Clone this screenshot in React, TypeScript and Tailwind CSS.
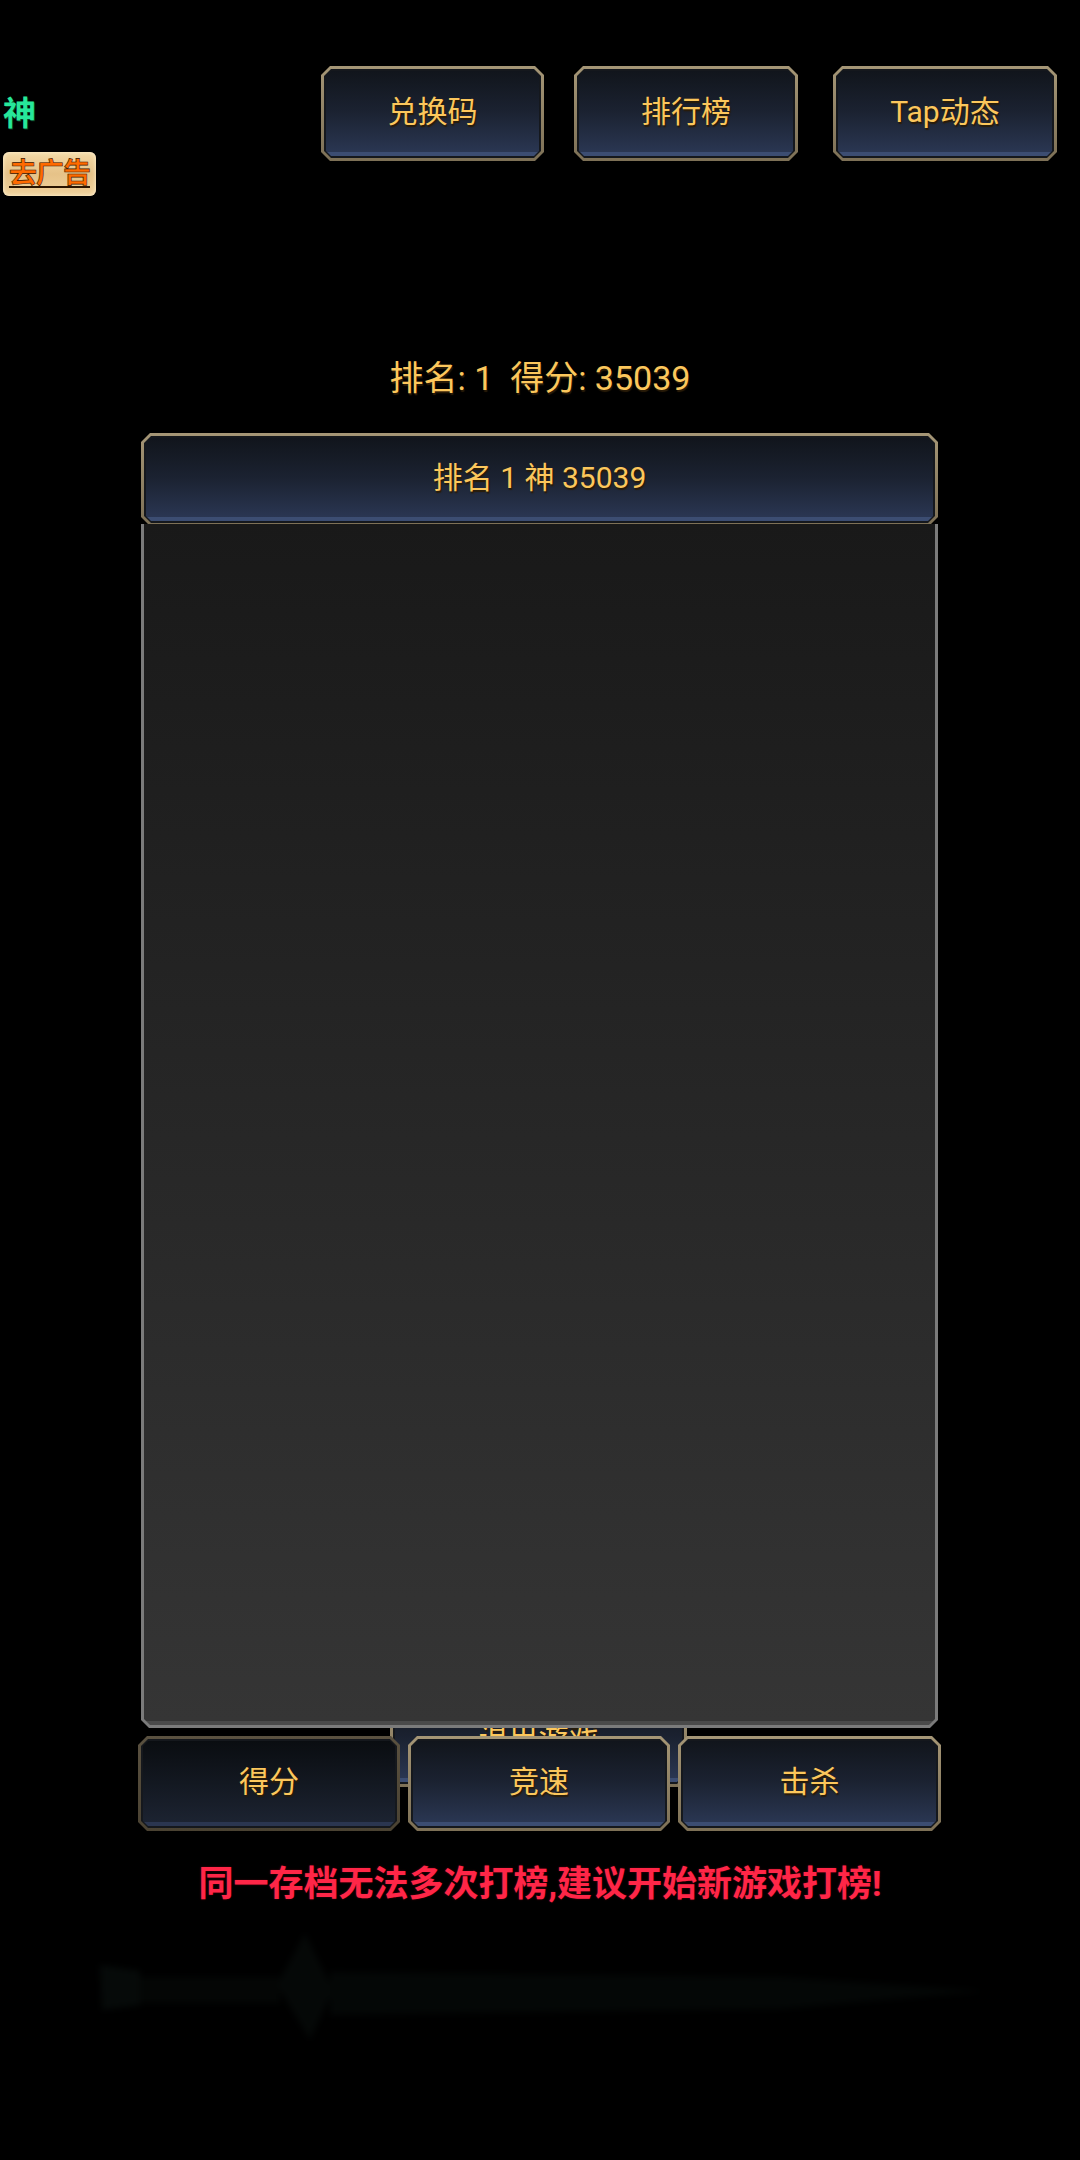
import { ReactNode } from "react";
import clsx from "clsx";

const font = "font-['Roboto','Noto_Sans_CJK_SC',sans-serif]";
const goldText = "text-[#fcc75c] [text-shadow:1px_2px_1px_#2a1c08]";

// chamfered frame: gold edge, navy gradient body
function FrameButton({
    children,
    dark,
    className,
}: {
    children: ReactNode;
    dark?: boolean;
    className?: string;
}) {
    return (
        <div
            className={clsx(
                "p-[3px] [clip-path:polygon(9px_0,calc(100%_-_9px)_0,100%_9px,100%_calc(100%_-_9px),calc(100%_-_9px)_100%,9px_100%,0_calc(100%_-_9px),0_9px)]",
                dark ? "bg-linear-to-b from-[#5a5140] to-[#4a4232]" : "bg-linear-to-b from-[#a59676] to-[#7d7056]",
                className
            )}
        >
            <div className="h-full w-full p-[2px] bg-[#15181d] [clip-path:polygon(7px_0,calc(100%_-_7px)_0,100%_7px,100%_calc(100%_-_7px),calc(100%_-_7px)_100%,7px_100%,0_calc(100%_-_7px),0_7px)]">
                <div
                    className={clsx(
                        "flex h-full w-full items-center justify-center border-b-[4px] [clip-path:polygon(5px_0,calc(100%_-_5px)_0,100%_5px,100%_calc(100%_-_5px),calc(100%_-_5px)_100%,5px_100%,0_calc(100%_-_5px),0_5px)]",
                        dark
                            ? "bg-linear-to-b from-[#0a0d11] to-[#1c2331] border-[#2b3650]"
                            : "bg-linear-to-b from-[#11151c] via-[#1b2231] to-[#2a3652] border-[#3c4d72]"
                    )}
                >
                    {children}
                </div>
            </div>
        </div>
    );
}

// faint sword silhouette at the bottom of the screen
function Sword() {
    return (
        <svg width="1080" height="150" viewBox="0 0 1080 150" className="block blur-[3px]">
            <path d="M100 56 L140 62 L140 96 L102 101 Z" fill="#060a09" />
            <rect x="140" y="68" width="140" height="26" fill="#040605" />
            <path d="M305 24 L333 81 L310 131 L277 76 Z" fill="#050807" />
            <path d="M330 63 L780 68 L985 82 L780 100 L330 106 Z" fill="#040706" />
        </svg>
    );
}

export default function App() {
    return (
        <div className={clsx("relative h-[2160px] w-[1080px] overflow-hidden bg-black", font)}>
            {/* exit button tucked behind panel and tabs */}
            <div className="absolute left-[390px] top-[1693px] z-0 h-[94px] w-[297px]">
                <FrameButton className="h-full w-full">
                    <span className={clsx("text-[30px] leading-none", goldText)}>退出游戏</span>
                </FrameButton>
            </div>

            <div className="relative z-10 flex flex-col">
                {/* top row */}
                <div className="flex h-[161px] items-start pt-[66px]">
                    <div className="flex w-[321px] flex-col items-start pl-[3px]">
                        <span className="mt-[31px] text-[33px] font-bold leading-none text-[#27e79a] [text-shadow:1px_1px_0_#0b3a24]">
                            神
                        </span>
                        <div className="mt-[22px] flex h-[44px] w-[93px] items-center justify-center rounded-[6px] bg-linear-to-b from-[#f3d9a6] via-[#e6c288] to-[#f0d29c] shadow-[inset_0_0_4px_#fff4d8]">
                            <span className="text-[28px] font-bold leading-none tracking-[-1px] text-[#ff6a00] underline decoration-[#2a1400] decoration-2 underline-offset-[3px] [-webkit-text-stroke:0.6px_#3a1600]">
                                去广告
                            </span>
                        </div>
                    </div>
                    <FrameButton className="h-[95px] w-[223px]">
                        <span className={clsx("text-[30px] leading-none", goldText)}>兑换码</span>
                    </FrameButton>
                    <FrameButton className="ml-[30px] h-[95px] w-[224px]">
                        <span className={clsx("text-[30px] leading-none", goldText)}>排行榜</span>
                    </FrameButton>
                    <FrameButton className="ml-[35px] h-[95px] w-[224px]">
                        <span className={clsx("text-[30px] leading-none", goldText)}>Tap动态</span>
                    </FrameButton>
                </div>

                {/* my rank */}
                <div className={clsx("mt-[197px] text-center text-[34px] leading-[40px]", goldText)}>
                    排名: 1&nbsp;&nbsp;得分: 35039
                </div>

                {/* leaderboard panel */}
                <div className="ml-[141px] mt-[35px] flex h-[1295px] w-[797px] flex-col">
                    <FrameButton className="h-[93px] w-full">
                        <span className={clsx("text-[30px] leading-none", goldText)}>排名 1 神 35039</span>
                    </FrameButton>
                    <div className="-mt-[2px] flex-1 bg-[#7b7b7b] px-[3px] pb-[3px] [clip-path:polygon(0_0,100%_0,100%_calc(100%_-_8px),calc(100%_-_8px)_100%,8px_100%,0_calc(100%_-_8px))]">
                        <div className="h-full w-full border-b-[4px] border-[#4a4a4a] bg-linear-to-b from-[#191919] to-[#353535] [clip-path:polygon(0_0,100%_0,100%_calc(100%_-_6px),calc(100%_-_6px)_100%,6px_100%,0_calc(100%_-_6px))]" />
                    </div>
                </div>

                {/* tabs */}
                <div className="ml-[138px] mt-[8px] flex gap-[8px]">
                    <FrameButton dark className="h-[95px] w-[262px]">
                        <span className={clsx("text-[30px] leading-none", goldText)}>得分</span>
                    </FrameButton>
                    <FrameButton className="h-[95px] w-[262px]">
                        <span className={clsx("text-[30px] leading-none", goldText)}>竞速</span>
                    </FrameButton>
                    <FrameButton className="h-[95px] w-[263px]">
                        <span className={clsx("text-[30px] leading-none", goldText)}>击杀</span>
                    </FrameButton>
                </div>

                <div className="mt-[34px] text-center text-[35px] font-bold leading-[40px] text-[#ff2647] [text-shadow:0_0_2px_#5a0010]">
                    同一存档无法多次打榜,建议开始新游戏打榜!
                </div>

                <div className="mt-[4px]">
                    <Sword />
                </div>
            </div>
        </div>
    );
}
